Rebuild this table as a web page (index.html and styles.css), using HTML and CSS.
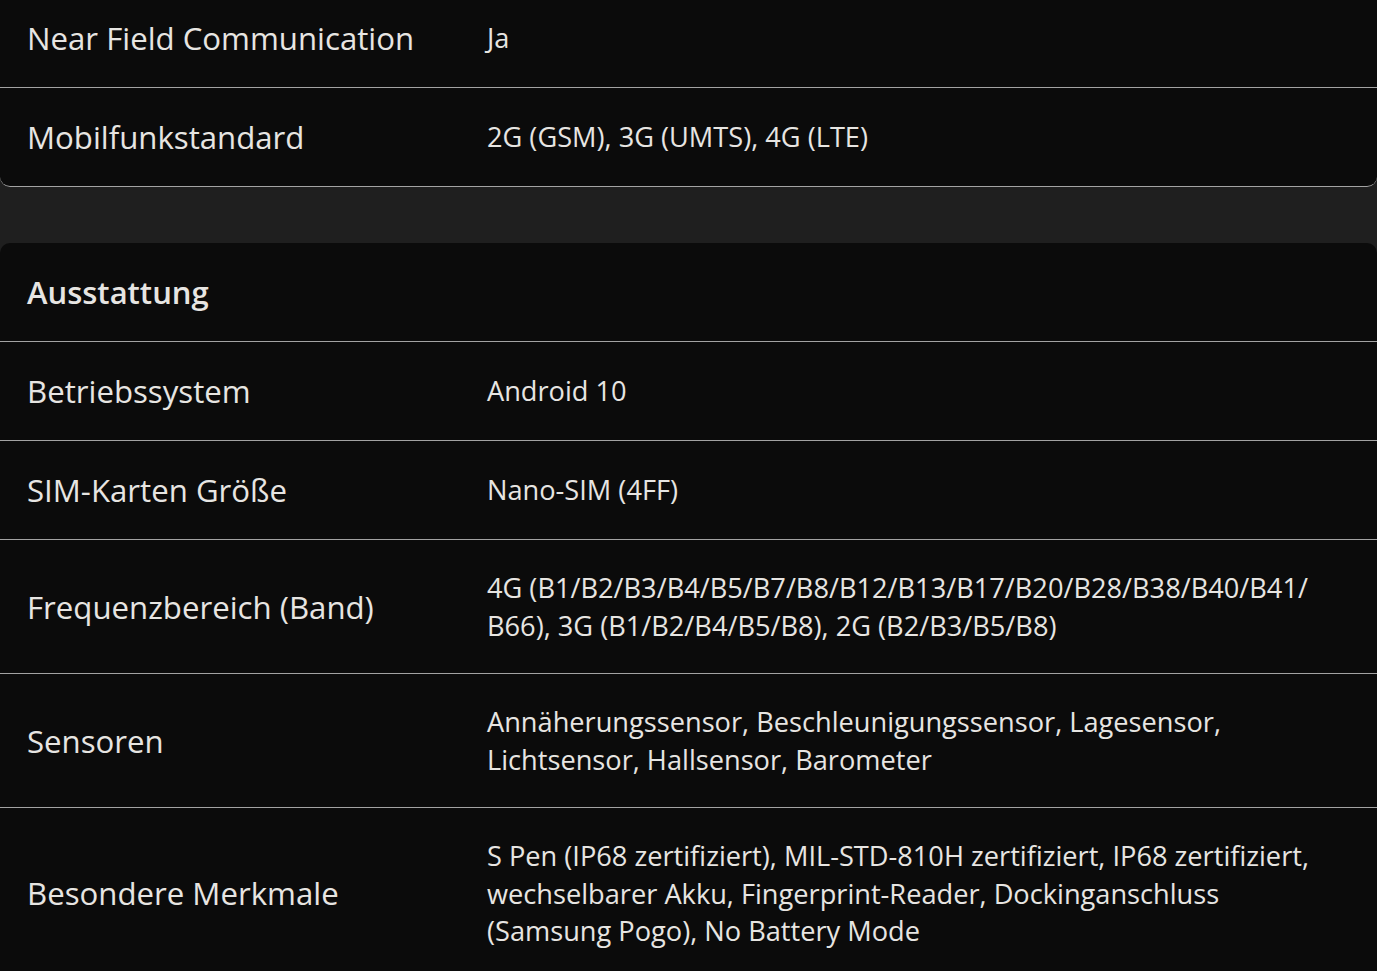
FILE: index.html
```html
<!DOCTYPE html>
<html lang="de">
<head>
<meta charset="utf-8">
<title>Technische Daten</title>
<link rel="stylesheet" href="styles.css">
</head>
<body>
<main class="page">
  <section class="card card--top">
    <div class="row">
      <div class="label">Near Field Communication</div>
      <div class="value">Ja</div>
    </div>
    <div class="row">
      <div class="label">Mobilfunkstandard</div>
      <div class="value">2G (GSM), 3G (UMTS), 4G (LTE)</div>
    </div>
  </section>

  <section class="card card--next">
    <div class="row row--head">
      <h2 class="title">Ausstattung</h2>
    </div>
    <div class="row">
      <div class="label">Betriebssystem</div>
      <div class="value">Android 10</div>
    </div>
    <div class="row">
      <div class="label">SIM-Karten Größe</div>
      <div class="value">Nano-SIM (4FF)</div>
    </div>
    <div class="row">
      <div class="label">Frequenzbereich (Band)</div>
      <div class="value">4G (B1/B2/B3/B4/B5/B7/B8/B12/B13/B17/B20/B28/B38/B40/B41/ B66), 3G (B1/B2/B4/B5/B8), 2G (B2/B3/B5/B8)</div>
    </div>
    <div class="row">
      <div class="label">Sensoren</div>
      <div class="value">Annäherungssensor, Beschleunigungssensor, Lagesensor, Lichtsensor, Hallsensor, Barometer</div>
    </div>
    <div class="row">
      <div class="label">Besondere Merkmale</div>
      <div class="value">S Pen (IP68 zertifiziert), MIL-STD-810H zertifiziert, IP68 zertifiziert, wechselbarer Akku, Fingerprint-Reader, Dockinganschluss (Samsung Pogo), No Battery Mode</div>
    </div>
  </section>
</main>
</body>
</html>
```

FILE: styles.css
```css
* { box-sizing: border-box; }

html, body {
  margin: 0;
  padding: 0;
  background: #1f1f1f;
  overflow: hidden;
}

body {
  font-family: "Open Sans", "Noto Sans", "Liberation Sans", sans-serif;
  color: #e7e5e2;
  -webkit-font-smoothing: antialiased;
}

.page {
  display: flex;
  flex-direction: column;
  gap: 56px;
  margin-top: -11px;
}

.card {
  background: #0b0b0b;
}

.card--top {
  border-radius: 0 0 10px 10px;
}

.card--next {
  border-radius: 10px 10px 0 0;
}

.row {
  display: grid;
  grid-template-columns: 460px 1fr;
  align-items: center;
  padding: 29px 45px 29px 27px;
  border-bottom: 1px solid #a3a3a3;
}

.card--top .row:last-child {
  border-bottom-left-radius: 10px;
  border-bottom-right-radius: 10px;
}

.label {
  font-size: 31.2px;
  line-height: 40px;
  font-weight: 400;
}

.value {
  font-size: 27.2px;
  line-height: 37.5px;
  font-weight: 400;
}

.row--head {
  display: block;
}

.title {
  margin: 0;
  font-size: 31px;
  line-height: 40px;
  font-weight: 600;
}
```
